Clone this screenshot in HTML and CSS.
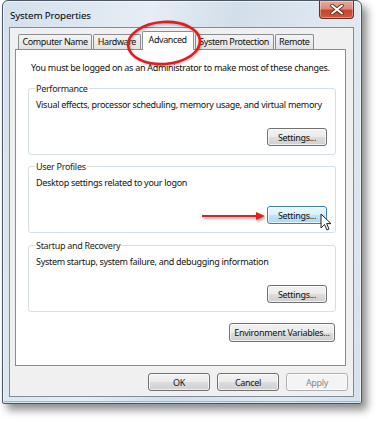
FILE: index.html
```html
<!DOCTYPE html>
<html lang="en">
<head>
    <meta charset="UTF-8">
    <meta name="viewport" content="width=device-width, initial-scale=1.0">
    <title>System Properties</title>
    <link rel="stylesheet" href="styles.css">
</head>
<body>
    <div class="shot">
        <div class="window">
            <div class="titlebar">
                <span class="title">System Properties</span>
                <span class="close">
                    <svg width="14" height="11" viewBox="0 0 14 11">
                        <path d="M2 1.5 L12 9.5 M12 1.5 L2 9.5" stroke="#5a2a22" stroke-width="3.6" stroke-linecap="round"/>
                        <path d="M2 1.5 L12 9.5 M12 1.5 L2 9.5" stroke="#fff" stroke-width="2" stroke-linecap="round"/>
                    </svg>
                </span>
            </div>
            <div class="client">
                <div class="tabs">
                    <span class="tab">Computer Name</span>
                    <span class="tab">Hardware</span>
                    <span class="tab active">Advanced</span>
                    <span class="tab">System Protection</span>
                    <span class="tab">Remote</span>
                </div>
                <div class="panel">
                    <p class="note">You must be logged on as an Administrator to make most of these changes.</p>
                    <fieldset class="group">
                        <legend>Performance</legend>
                        <p>Visual effects, processor scheduling, memory usage, and virtual memory</p>
                        <div class="row"><button class="btn">Settings...</button></div>
                    </fieldset>
                    <fieldset class="group">
                        <legend>User Profiles</legend>
                        <p>Desktop settings related to your logon</p>
                        <div class="row"><button class="btn hot">Settings...</button></div>
                    </fieldset>
                    <fieldset class="group startup">
                        <legend>Startup and Recovery</legend>
                        <p>System startup, system failure, and debugging information</p>
                        <div class="row"><button class="btn">Settings...</button></div>
                    </fieldset>
                    <div class="env"><button class="btn wide">Environment Variables...</button></div>
                </div>
                <div class="actions">
                    <button class="btn">OK</button>
                    <button class="btn">Cancel</button>
                    <button class="btn" disabled>Apply</button>
                </div>
            </div>
        </div>

        <!-- annotations drawn over the screenshot -->
        <svg class="ring" width="84" height="52" viewBox="0 0 84 52">
            <ellipse cx="42" cy="25" rx="36" ry="21" transform="rotate(-4 42 25)" fill="none" stroke="#e31c1c" stroke-width="2.6"/>
        </svg>
        <svg class="arrow" width="68" height="14" viewBox="0 0 68 14">
            <path d="M2 6 H58" stroke="#e3211c" stroke-width="2"/>
            <path d="M56 2 L65 6 L56 10 Z" fill="#e3211c"/>
        </svg>
        <svg class="cursor" width="13" height="19" viewBox="0 0 13 19">
            <path d="M1 1 L1 15 L4.5 11.5 L7 17 L9 16 L6.6 10.6 L11 10.6 Z" fill="#fff" stroke="#222" stroke-width="1" stroke-linejoin="round"/>
        </svg>
    </div>
</body>
</html>
```

FILE: styles.css
```css
body {
    margin: 0;
    background-color: #fff;
    font-family: "Noto Sans", sans-serif;
    font-size: 9px;
    letter-spacing: -0.3px;
    color: #111;
}
.shot {
    position: relative;
    width: 379px;
    height: 424px;
    overflow: hidden;
}
.window {
    width: 360px;
    margin-left: 2px;
    box-sizing: border-box;
    padding-bottom: 6px;
    border: 1px solid #4a5561;
    border-radius: 6px 6px 2px 2px;
    background: linear-gradient(100deg, #d4e0ec 0%, #e6edf4 35%, #d2deea 55%, #e2e9f1 80%, #d6e1ec 100%);
    box-shadow: 5px 6px 9px rgba(0, 0, 0, 0.45), inset 0 0 0 1px rgba(255, 255, 255, 0.6), inset 0 -2px 0 #7cc6e6;
}
.titlebar {
    height: 26px;
    display: flex;
    align-items: flex-start;
}
.title {
    margin: 8px 0 0 7px;
    font-size: 9.8px;
    letter-spacing: -0.15px;
    line-height: 13px;
    color: #000;
}
.close {
    margin-left: auto;
    margin-right: 7px;
    width: 35px;
    height: 18px;
    box-sizing: border-box;
    display: flex;
    align-items: center;
    justify-content: center;
    border: 1px solid #6e2b20;
    border-top: none;
    border-radius: 0 0 4px 4px;
    background: linear-gradient(#e9aa9b 0%, #dc8a77 45%, #c5452e 55%, #d0593f 100%);
    box-shadow: inset 0 0 0 1px rgba(255, 255, 255, 0.35);
}
.client {
    margin: 0 7px 0 6px;
    padding: 3px 5px 5px;
    border: 1px solid #7f8d9b;
    background-color: #f0f0f0;
}
.tabs {
    display: flex;
    align-items: flex-end;
    height: 18px;
    padding-left: 3px;
}
.tab {
    height: 15px;
    box-sizing: border-box;
    margin-right: 1px;
    padding: 0 3.5px;
    border: 1px solid #898c95;
    border-bottom: none;
    border-radius: 2px 2px 0 0;
    background: linear-gradient(#f4f4f4, #e2e2e2);
    letter-spacing: -0.4px;
    line-height: 14px;
    white-space: nowrap;
}
.tab.active {
    position: relative;
    z-index: 1;
    height: 19px;
    margin-bottom: -1px;
    padding: 0 6px;
    background: #fff;
    line-height: 15px;
}
.panel {
    width: 331px;
    height: 317px;
    box-sizing: border-box;
    padding: 11px 9px 0 12px;
    border: 1px solid #898c95;
    background-color: #fff;
}
.note {
    margin: 0 0 8px 3px;
    line-height: 13px;
    white-space: nowrap;
}
.group {
    margin: 0;
    padding: 3px 8px 8px 7px;
    border: 1px solid #d5dfe5;
    border-radius: 3px;
}
.group + .group {
    margin-top: 5px;
}
.group.startup {
    margin-top: 6px;
}
.group legend {
    margin-left: -1px;
    padding: 0 1px;
    line-height: 13px;
    color: #1e1e1e;
}
.group p {
    margin: 0;
    line-height: 13px;
    white-space: nowrap;
}
.row {
    display: flex;
    justify-content: flex-end;
    margin-top: 17px;
}
.env {
    display: flex;
    justify-content: flex-end;
    margin: 11px 1px 0 0;
}
.btn {
    width: 60px;
    height: 18px;
    padding: 0;
    border: 1px solid #707070;
    border-radius: 3px;
    background: linear-gradient(#f2f2f2 0%, #ebebeb 50%, #dddddd 50%, #cfcfcf 100%);
    box-shadow: inset 0 0 0 1px rgba(255, 255, 255, 0.7);
    font: inherit;
    letter-spacing: inherit;
    color: #111;
    white-space: nowrap;
}
.btn.hot {
    border-color: #3c7fb1;
    background: linear-gradient(#eaf6fd 0%, #d9f0fc 50%, #bee6fd 50%, #a7d9f5 100%);
}
.btn.wide {
    width: 106px;
    height: 19px;
}
.btn:disabled {
    border-color: #adb2b5;
    background: #f4f4f4;
    color: #8a8a8a;
}
.actions {
    display: flex;
    justify-content: flex-end;
    gap: 7px;
    margin-top: 7px;
}
.actions .btn {
    width: 62px;
}
.ring {
    position: absolute;
    left: 122px;
    top: 18px;
    filter: drop-shadow(1px 1px 1px rgba(0, 0, 0, 0.3));
}
.arrow {
    position: absolute;
    left: 200px;
    top: 210px;
    filter: drop-shadow(1px 2px 1px rgba(0, 0, 0, 0.35));
}
.cursor {
    position: absolute;
    left: 320px;
    top: 213px;
}
```
